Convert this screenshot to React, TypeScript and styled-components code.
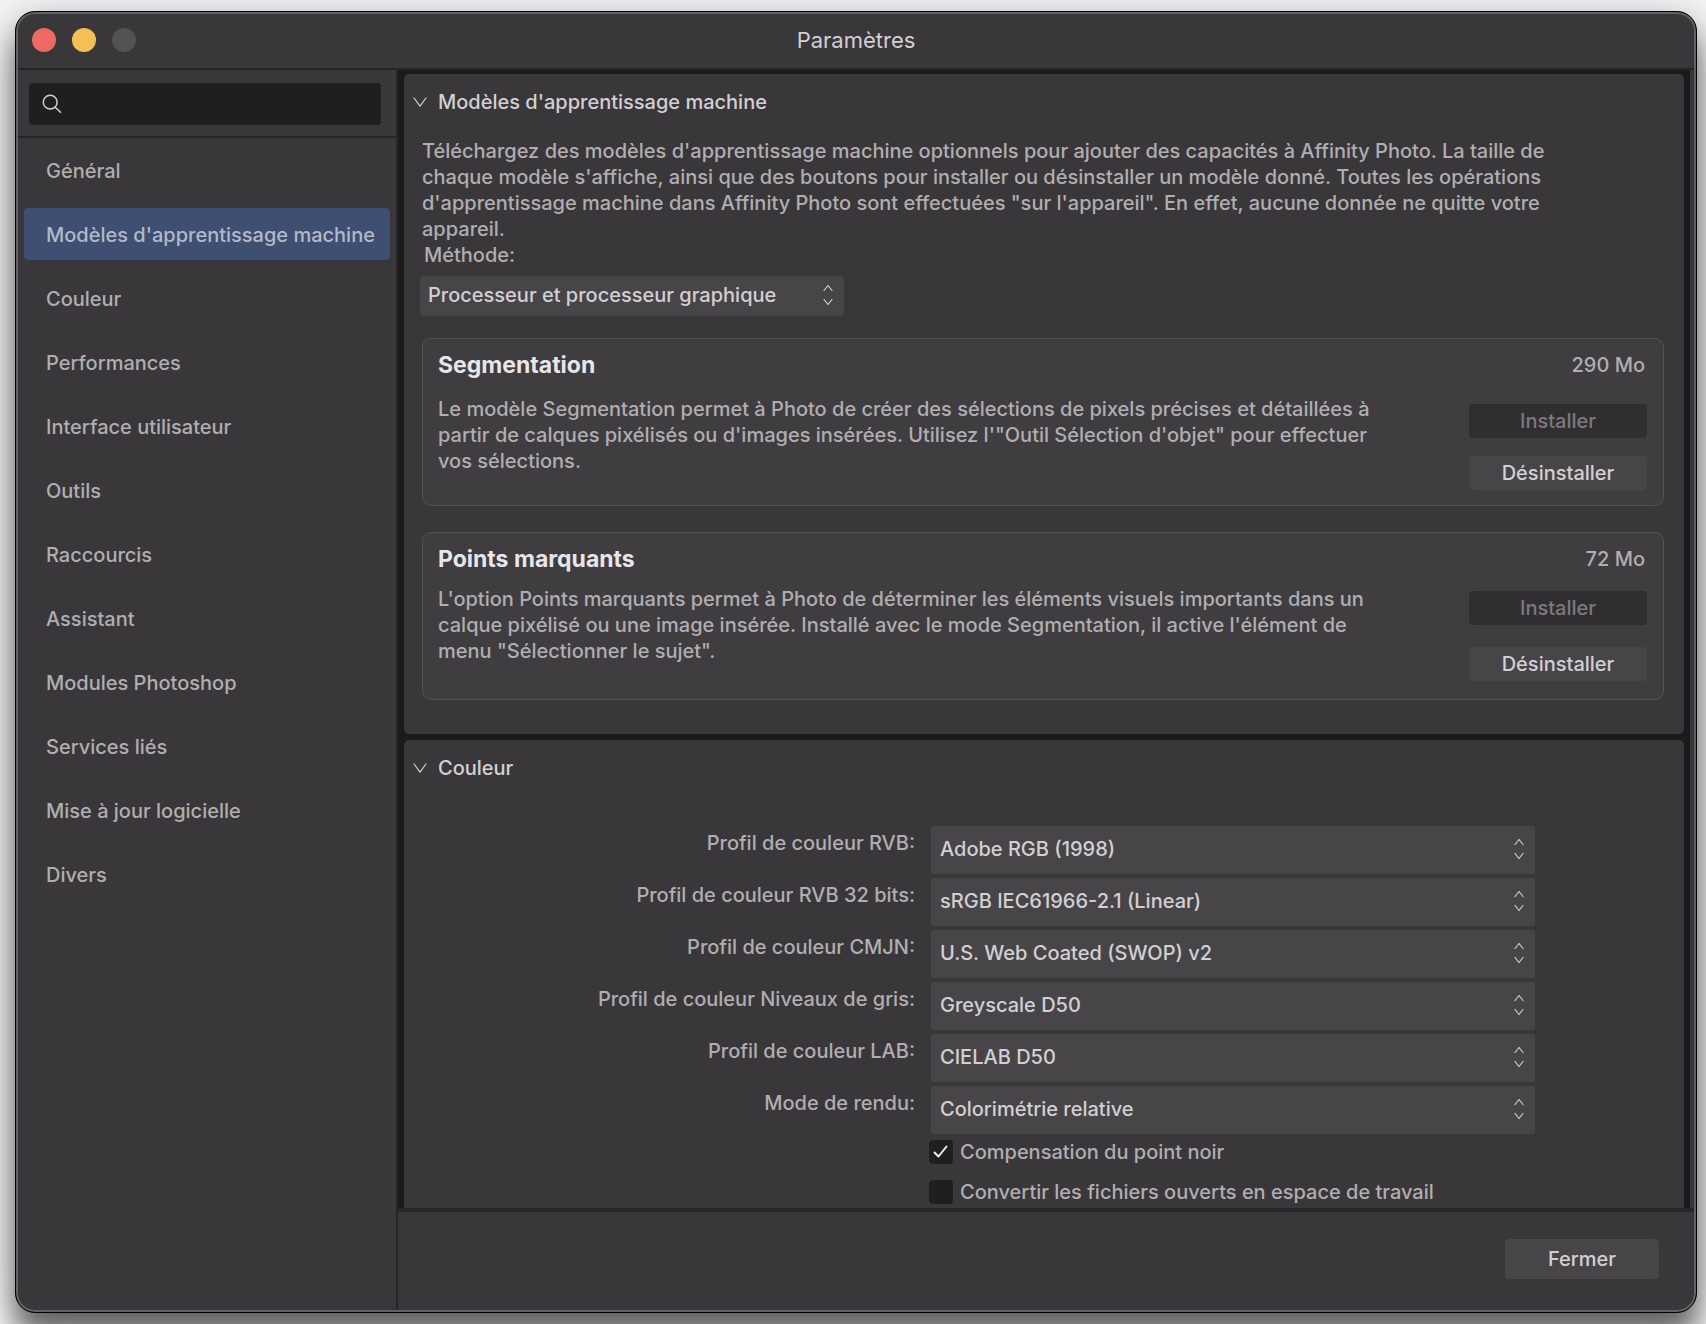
import React, { useId, useState } from "react";
import styled, { createGlobalStyle, css } from "styled-components";

const color = {
  chrome: "#393739",
  card: "#3f3d40",
  control: "#474548",
  well: "#201e21",
  gutter: "#1c1a1d",
  line: "#272528",
  outline: "#545255",
  accent: "#3e4f71",
  text: "#b0aeb1",
  textStrong: "#d2d0d3",
  textDisabled: "#7c7a7d",
};

const GlobalStyle = createGlobalStyle`
  *, *::before, *::after { box-sizing: border-box; }
  body { margin: 0; background: #f5f3f6; }
  body, button, input, select {
    font-family: Inter, "Liberation Sans", sans-serif;
    font-size: 20px;
    font-weight: 500;
    line-height: 26px;
  }
`;

const Desktop = styled.div`
  height: 100vh;
  padding: 11px 9px 11px 15px;
  overflow: hidden;
  color: ${color.text};
`;

const Window = styled.div`
  height: 100%;
  display: flex;
  flex-direction: column;
  padding: 2px;
  border: 1px solid #000;
  border-radius: 20px;
  background: ${color.chrome};
  box-shadow: inset 0 0 0 2px #626064, 0 24px 28px rgba(0, 0, 0, 0.5),
    0 8px 40px rgba(0, 0, 0, 0.25);
`;

const TitleBar = styled.header`
  display: grid;
  grid-template-columns: 1fr auto 1fr;
  align-items: center;
  height: 56px;
  padding: 0 14px 2px;
  border-bottom: 2px solid ${color.line};
`;

const Lights = styled.div`
  display: flex;
  gap: 16px;
`;

const Light = styled.button<{ $tint: string }>`
  width: 24px;
  height: 24px;
  padding: 0;
  border: 0;
  border-radius: 50%;
  background: ${(p) => p.$tint};
`;

const Title = styled.h1`
  margin: 0;
  font-size: 22px;
  font-weight: 400;
  color: ${color.textStrong};
`;

const Body = styled.div`
  flex: 1;
  min-height: 0;
  display: flex;
`;

const Sidebar = styled.aside`
  flex: none;
  width: 380px;
  border-right: 2px solid ${color.line};
`;

const SearchArea = styled.div`
  padding: 13px 15px 11px 11px;
  border-bottom: 2px solid ${color.line};
`;

const SearchField = styled.label`
  display: flex;
  align-items: center;
  gap: 10px;
  height: 42px;
  padding: 0 13px;
  border-radius: 4px;
  background: ${color.well};
  color: ${color.textStrong};
`;

const SearchInput = styled.input`
  flex: 1;
  min-width: 0;
  padding: 0;
  border: 0;
  outline: 0;
  background: none;
  color: inherit;
`;

const Nav = styled.nav`
  display: flex;
  flex-direction: column;
  gap: 12px;
  padding: 6px;
`;

const NavItem = styled.button<{ $active: boolean }>`
  height: 52px;
  padding: 2px 0 0 22px;
  border: 0;
  border-radius: 4px;
  text-align: left;
  white-space: nowrap;
  color: ${(p) => (p.$active ? "#b3b9c9" : color.text)};
  background: ${(p) => (p.$active ? color.accent : "transparent")};
`;

const Main = styled.main`
  flex: 1;
  min-width: 0;
  display: flex;
  flex-direction: column;
`;

const Scroll = styled.div`
  flex: 1;
  min-height: 0;
  display: flex;
  flex-direction: column;
  gap: 6px;
  margin-right: 4px;
  padding: 4px 6px 0;
  overflow: hidden;
  background: ${color.gutter};
`;

const Panel = styled.section<{ $fill?: boolean }>`
  flex: ${(p) => (p.$fill ? "1 0 auto" : "none")};
  border-radius: ${(p) => (p.$fill ? "5px 5px 0 0" : "5px")};
  background: ${color.chrome};
`;

const PanelToggle = styled.button`
  display: flex;
  align-items: center;
  gap: 10px;
  width: 100%;
  height: 56px;
  padding: 0 8px;
  border: 0;
  background: none;
  color: ${color.textStrong};
`;

const ModelsContent = styled.div`
  padding: 8px 20px 34px 18px;
`;

const Intro = styled.p`
  max-width: 1150px;
  margin: 0;
`;

const MethodField = styled.div`
  display: flex;
  flex-direction: column;
  gap: 8px;
  width: 424px;
  margin: 0 0 22px -2px;

  label {
    padding-left: 4px;
  }
`;

const SelectBox = styled.div<{ $tall?: boolean }>`
  position: relative;
  height: ${(p) => (p.$tall ? "48px" : "40px")};

  select {
    appearance: none;
    width: 100%;
    height: 100%;
    padding: 0 32px 2px ${(p) => (p.$tall ? "9px" : "8px")};
    border: 0;
    border-radius: ${(p) => (p.$tall ? "2px" : "4px")};
    background: ${color.control};
    color: ${color.textStrong};
  }

  svg {
    position: absolute;
    top: 0;
    bottom: 2px;
    right: 10px;
    margin: auto 0;
    pointer-events: none;
    color: ${color.textStrong};
  }
`;

const Cards = styled.div`
  display: flex;
  flex-direction: column;
  gap: 26px;
`;

const Card = styled.article`
  display: flex;
  justify-content: space-between;
  min-height: 168px;
  padding: 13px 16px 0 15px;
  border: 1px solid ${color.outline};
  border-radius: 9px;
  background: ${color.card};
`;

const CardText = styled.div<{ $gap: number }>`
  display: flex;
  flex-direction: column;
  gap: ${(p) => p.$gap}px;
  max-width: 960px;

  h2 {
    margin: 0;
    font-size: 23px;
    line-height: 26px;
    font-weight: 700;
    color: #e8e6e9;
  }

  p {
    margin: 0;
  }
`;

const CardActions = styled.div<{ $dense: boolean }>`
  flex: none;
  display: flex;
  flex-direction: column;
  gap: ${(p) => (p.$dense ? "22px" : "18px")};
  width: 178px;

  span {
    padding-right: 2px;
    text-align: right;
    margin-bottom: ${(p) => (p.$dense ? "-3px" : "8px")};
  }
`;

const Button = styled.button<{ $large?: boolean }>`
  height: 34px;
  padding: 0;
  border: 0;
  border-radius: 4px;
  background: ${color.control};
  color: ${color.textStrong};

  &:disabled {
    background: #302e31;
    color: ${color.textDisabled};
  }

  ${(p) =>
    p.$large &&
    css`
      width: 154px;
      height: 40px;
    `}
`;

const ColorForm = styled.div`
  display: grid;
  grid-template-columns: 511fr 604fr;
  gap: 4px 16px;
  padding: 30px 149px 0 0;

  > label {
    padding-top: 4px;
    text-align: right;
  }
`;

const Checks = styled.div`
  grid-column: 2;
  display: flex;
  flex-direction: column;
  gap: 14px;
  padding-top: 1px;
  margin-left: -2px;
`;

const CheckLabel = styled.label`
  display: flex;
  align-items: center;
  gap: 7px;
  white-space: nowrap;
`;

const CheckBox = styled.span`
  display: grid;
  width: 24px;
  height: 24px;
  border-radius: 4px;
  background: ${color.well};
  color: #f0eef1;

  input,
  svg {
    grid-area: 1 / 1;
    width: 24px;
    height: 24px;
    margin: 0;
  }

  input {
    appearance: none;
  }

  svg {
    pointer-events: none;
    visibility: hidden;
  }

  input:checked + svg {
    visibility: visible;
  }
`;

const Footer = styled.footer`
  display: flex;
  justify-content: flex-end;
  height: 102px;
  padding: 27px 35px 0;
  border-top: 4px solid ${color.line};
`;

const stroke = {
  fill: "none",
  stroke: "currentColor",
  strokeLinecap: "round",
  strokeLinejoin: "round",
} as const;

const SearchIcon = () => (
  <svg width="20" height="20" viewBox="0 0 20 20" strokeWidth="1.5" {...stroke}>
    <circle cx="8.2" cy="8.2" r="6.9" />
    <path d="M13.2 13.2 18.5 18.3" />
  </svg>
);

const Disclosure = () => (
  <svg width="16" height="16" viewBox="0 0 16 16" strokeWidth="1.2" {...stroke}>
    <path d="M2 4 8 12.2 14 4" />
  </svg>
);

const UpDown = () => (
  <svg width="12" height="22" viewBox="0 0 12 22" strokeWidth="1.2" {...stroke}>
    <path d="M2 6.5 6 1.5 10 6.5M2 15.5 6 20.5 10 15.5" />
  </svg>
);

const Tick = () => (
  <svg viewBox="0 0 24 24" strokeWidth="2" {...stroke}>
    <path d="M5.5 12.5 9.5 16.5 17.5 6.5" />
  </svg>
);

const sections = [
  "Général",
  "Modèles d'apprentissage machine",
  "Couleur",
  "Performances",
  "Interface utilisateur",
  "Outils",
  "Raccourcis",
  "Assistant",
  "Modules Photoshop",
  "Services liés",
  "Mise à jour logicielle",
  "Divers",
];

const models = [
  {
    name: "Segmentation",
    size: "290 Mo",
    dense: false,
    text: "Le modèle Segmentation permet à Photo de créer des sélections de pixels précises et détaillées à partir de calques pixélisés ou d'images insérées. Utilisez l'\"Outil Sélection d'objet\" pour effectuer vos sélections.",
  },
  {
    name: "Points marquants",
    size: "72 Mo",
    dense: true,
    text: "L'option Points marquants permet à Photo de déterminer les éléments visuels importants dans un calque pixélisé ou une image insérée. Installé avec le mode Segmentation, il active l'élément de menu \"Sélectionner le sujet\".",
  },
];

const profiles = [
  ["Profil de couleur RVB:", "Adobe RGB (1998)"],
  ["Profil de couleur RVB 32 bits:", "sRGB IEC61966-2.1 (Linear)"],
  ["Profil de couleur CMJN:", "U.S. Web Coated (SWOP) v2"],
  ["Profil de couleur Niveaux de gris:", "Greyscale D50"],
  ["Profil de couleur LAB:", "CIELAB D50"],
  ["Mode de rendu:", "Colorimétrie relative"],
];

function Select({ id, value, tall }: { id: string; value: string; tall?: boolean }) {
  return (
    <SelectBox $tall={tall}>
      <select id={id} defaultValue={value}>
        <option>{value}</option>
      </select>
      <UpDown />
    </SelectBox>
  );
}

function Check({ label, checked }: { label: string; checked?: boolean }) {
  return (
    <CheckLabel>
      <CheckBox>
        <input type="checkbox" defaultChecked={checked} />
        <Tick />
      </CheckBox>
      {label}
    </CheckLabel>
  );
}

export default function App() {
  const [active, setActive] = useState(1);
  const uid = useId();

  return (
    <>
      <GlobalStyle />
      <Desktop>
        <Window>
          <TitleBar>
            <Lights>
              <Light $tint="#ec6a62" aria-label="Fermer la fenêtre" />
              <Light $tint="#f4bf55" aria-label="Réduire" />
              <Light $tint="#545255" aria-label="Agrandir" disabled />
            </Lights>
            <Title>Paramètres</Title>
          </TitleBar>
          <Body>
            <Sidebar>
              <SearchArea>
                <SearchField>
                  <SearchIcon />
                  <SearchInput type="text" aria-label="Rechercher" />
                </SearchField>
              </SearchArea>
              <Nav>
                {sections.map((name, i) => (
                  <NavItem key={name} $active={i === active} onClick={() => setActive(i)}>
                    {name}
                  </NavItem>
                ))}
              </Nav>
            </Sidebar>
            <Main>
              <Scroll>
                <Panel>
                  <PanelToggle aria-expanded>
                    <Disclosure />
                    Modèles d'apprentissage machine
                  </PanelToggle>
                  <ModelsContent>
                    <Intro>
                      Téléchargez des modèles d'apprentissage machine optionnels pour ajouter des
                      capacités à Affinity Photo. La taille de chaque modèle s'affiche, ainsi que
                      des boutons pour installer ou désinstaller un modèle donné. Toutes les
                      opérations d'apprentissage machine dans Affinity Photo sont effectuées "sur
                      l'appareil". En effet, aucune donnée ne quitte votre appareil.
                    </Intro>
                    <MethodField>
                      <label htmlFor={`${uid}-method`}>Méthode:</label>
                      <Select id={`${uid}-method`} value="Processeur et processeur graphique" />
                    </MethodField>
                    <Cards>
                      {models.map((m) => (
                        <Card key={m.name}>
                          <CardText $gap={m.dense ? 14 : 18}>
                            <h2>{m.name}</h2>
                            <p>{m.text}</p>
                          </CardText>
                          <CardActions $dense={m.dense}>
                            <span>{m.size}</span>
                            <Button disabled>Installer</Button>
                            <Button>Désinstaller</Button>
                          </CardActions>
                        </Card>
                      ))}
                    </Cards>
                  </ModelsContent>
                </Panel>
                <Panel $fill>
                  <PanelToggle aria-expanded>
                    <Disclosure />
                    Couleur
                  </PanelToggle>
                  <ColorForm>
                    {profiles.map(([label, value], i) => (
                      <React.Fragment key={label}>
                        <label htmlFor={`${uid}-p${i}`}>{label}</label>
                        <Select id={`${uid}-p${i}`} value={value} tall />
                      </React.Fragment>
                    ))}
                    <Checks>
                      <Check label="Compensation du point noir" checked />
                      <Check label="Convertir les fichiers ouverts en espace de travail" />
                    </Checks>
                  </ColorForm>
                </Panel>
              </Scroll>
              <Footer>
                <Button $large>Fermer</Button>
              </Footer>
            </Main>
          </Body>
        </Window>
      </Desktop>
    </>
  );
}
